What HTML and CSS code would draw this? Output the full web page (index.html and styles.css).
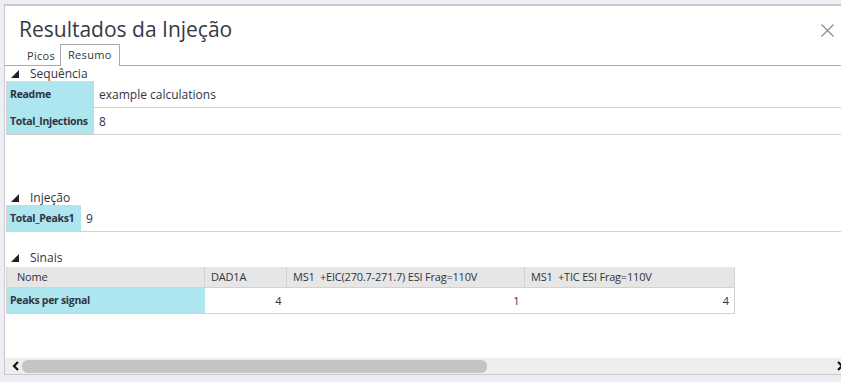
FILE: index.html
```html
<!DOCTYPE html>
<html lang="pt">
<head>
  <meta charset="UTF-8">
  <title>Resultados da Injeção</title>
  <link rel="stylesheet" href="styles.css">
</head>
<body>
  <div class="panel">
    <div class="header">
      <div class="title">Resultados da Injeção</div>
      <svg class="close" width="13" height="13" viewBox="0 0 13 13">
        <path d="M0.5 0.5 L12.5 12.5 M12.5 0.5 L0.5 12.5" stroke="#8b8b8b" stroke-width="1.2" fill="none"/>
      </svg>
    </div>
    <div class="tabs">
      <span class="tab">Picos</span>
      <span class="tab active">Resumo</span>
    </div>
    <div class="content">
      <div class="group">
        <div class="group-head"><svg class="tri" width="8" height="8" viewBox="0 0 8 8"><polygon points="8,0 8,8 0,8" fill="#222"/></svg>Sequência</div>
        <div class="props seq">
          <div class="key">Readme</div>
          <div class="val">example calculations</div>
          <div class="key">Total_Injections</div>
          <div class="val">8</div>
        </div>
      </div>

      <div class="group injecao">
        <div class="group-head"><svg class="tri" width="8" height="8" viewBox="0 0 8 8"><polygon points="8,0 8,8 0,8" fill="#222"/></svg>Injeção</div>
        <div class="props">
          <div class="key">Total_Peaks1</div>
          <div class="val">9</div>
        </div>
      </div>

      <div class="group sinais">
        <div class="group-head"><svg class="tri" width="8" height="8" viewBox="0 0 8 8"><polygon points="8,0 8,8 0,8" fill="#222"/></svg>Sinais</div>
        <table class="grid">
          <tr class="head">
            <th class="c1">Nome</th>
            <th class="c2">DAD1A</th>
            <th class="c3">MS1 &nbsp;+EIC(270.7-271.7) ESI Frag=110V</th>
            <th class="c4">MS1 &nbsp;+TIC ESI Frag=110V</th>
          </tr>
          <tr>
            <td class="key">Peaks per signal</td>
            <td class="num">4</td>
            <td class="num">1</td>
            <td class="num">4</td>
          </tr>
        </table>
      </div>
    </div>
    <div class="hscroll">
      <svg class="arrow" width="8" height="10" viewBox="0 0 8 10"><path d="M6 1 L2 5 L6 9" stroke="#111" stroke-width="2.2" fill="none"/></svg>
      <div class="track"><div class="thumb"></div></div>
      <svg class="arrow" width="8" height="10" viewBox="0 0 8 10"><path d="M2 1 L6 5 L2 9" stroke="#111" stroke-width="2.2" fill="none"/></svg>
    </div>
  </div>
</body>
</html>
```

FILE: styles.css
```css
* {
  margin: 0;
  padding: 0;
  box-sizing: border-box;
}
html,
body {
  height: 100%;
  background: #ecedf5;
  font-family: 'Open Sans', 'Noto Sans', sans-serif;
  color: #2f3440;
  overflow: hidden;
}
body {
  padding: 4px 0 0 4px;
}
.panel {
  width: 845px;
  height: 371px;
  background: #ffffff;
  border: 1px solid #c9c9c9;
  border-right: none;
  border-top: 2px solid #c9c9c9;
  display: flex;
  flex-direction: column;
}
.header {
  height: 38px;
  display: flex;
  justify-content: space-between;
  align-items: flex-start;
  padding: 8px 15px 0 14px;
}
.title {
  font-size: 21px;
  line-height: 30px;
  color: #353a47;
}
.close {
  margin-top: 10px;
}
.tabs {
  height: 22px;
  display: flex;
  align-items: flex-end;
  border-bottom: 1px solid #a9a9a9;
  padding-left: 17px;
}
.tab {
  font-size: 11px;
  line-height: 18px;
  padding: 0 5px;
  color: #2f3440;
  letter-spacing: 0.3px;
}
.tab.active {
  height: 22px;
  margin-bottom: -1px;
  background: #ffffff;
  border: 1px solid #a9a9a9;
  border-bottom: none;
  padding: 1px 7px 0;
}
.content {
  flex: 1;
  overflow: hidden;
}
.group-head {
  height: 15px;
  display: flex;
  align-items: center;
  font-size: 12px;
  color: #2f3440;
  padding-left: 6px;
}
.tri {
  margin-right: 11px;
}
.props {
  display: grid;
  grid-template-columns: 74px 1fr;
  grid-auto-rows: 27px;
  margin-left: 1px;
  border-left: 1px solid #d2d2d2;
}
.props.seq {
  grid-template-columns: 87px 1fr;
}
.props .key,
.props .val {
  display: flex;
  align-items: center;
  border-bottom: 1px solid #d2d2d2;
}
.props .key {
  background: #aee6ef;
  font-weight: 700;
  font-size: 10.5px;
  padding-left: 3px;
  letter-spacing: -0.3px;
  white-space: nowrap;
}
.props .val {
  font-size: 12px;
  padding-left: 5px;
}
.injecao {
  margin-top: 55px;
}
.sinais {
  margin-top: 18px;
}
.grid {
  border-collapse: collapse;
  margin-left: 1px;
  margin-top: 2px;
  font-size: 11px;
}
.grid th {
  background: #e6e6e6;
  font-weight: 400;
  text-align: left;
  height: 20px;
  padding: 0 0 0 6px;
  border-right: 1px solid #d2d2d2;
  border-bottom: 1px solid #d2d2d2;
  white-space: nowrap;
  letter-spacing: -0.2px;
}
.grid th.c1 {
  width: 198px;
  padding-left: 10px;
  border-left: 1px solid #d2d2d2;
}
.grid th.c2 {
  width: 82px;
}
.grid th.c3 {
  width: 238px;
}
.grid th.c4 {
  width: 210px;
}
.grid td {
  height: 26px;
  border-bottom: 1px solid #d2d2d2;
}
.grid td.key {
  background: #aee6ef;
  font-weight: 700;
  font-size: 10.5px;
  padding-left: 3px;
  border-left: 1px solid #d2d2d2;
  letter-spacing: -0.3px;
}
.grid td.num {
  text-align: right;
  padding-right: 5px;
}
.grid td:last-child {
  border-right: 1px solid #d2d2d2;
}
.hscroll {
  height: 16px;
  background: #eeeeee;
  display: flex;
  align-items: center;
  padding: 0 5px 0 7px;
}
.track {
  flex: 1;
  height: 13px;
  padding-left: 2px;
}
.thumb {
  width: 465px;
  height: 13px;
  background: #c4c4c4;
  border-radius: 6px;
}
```
